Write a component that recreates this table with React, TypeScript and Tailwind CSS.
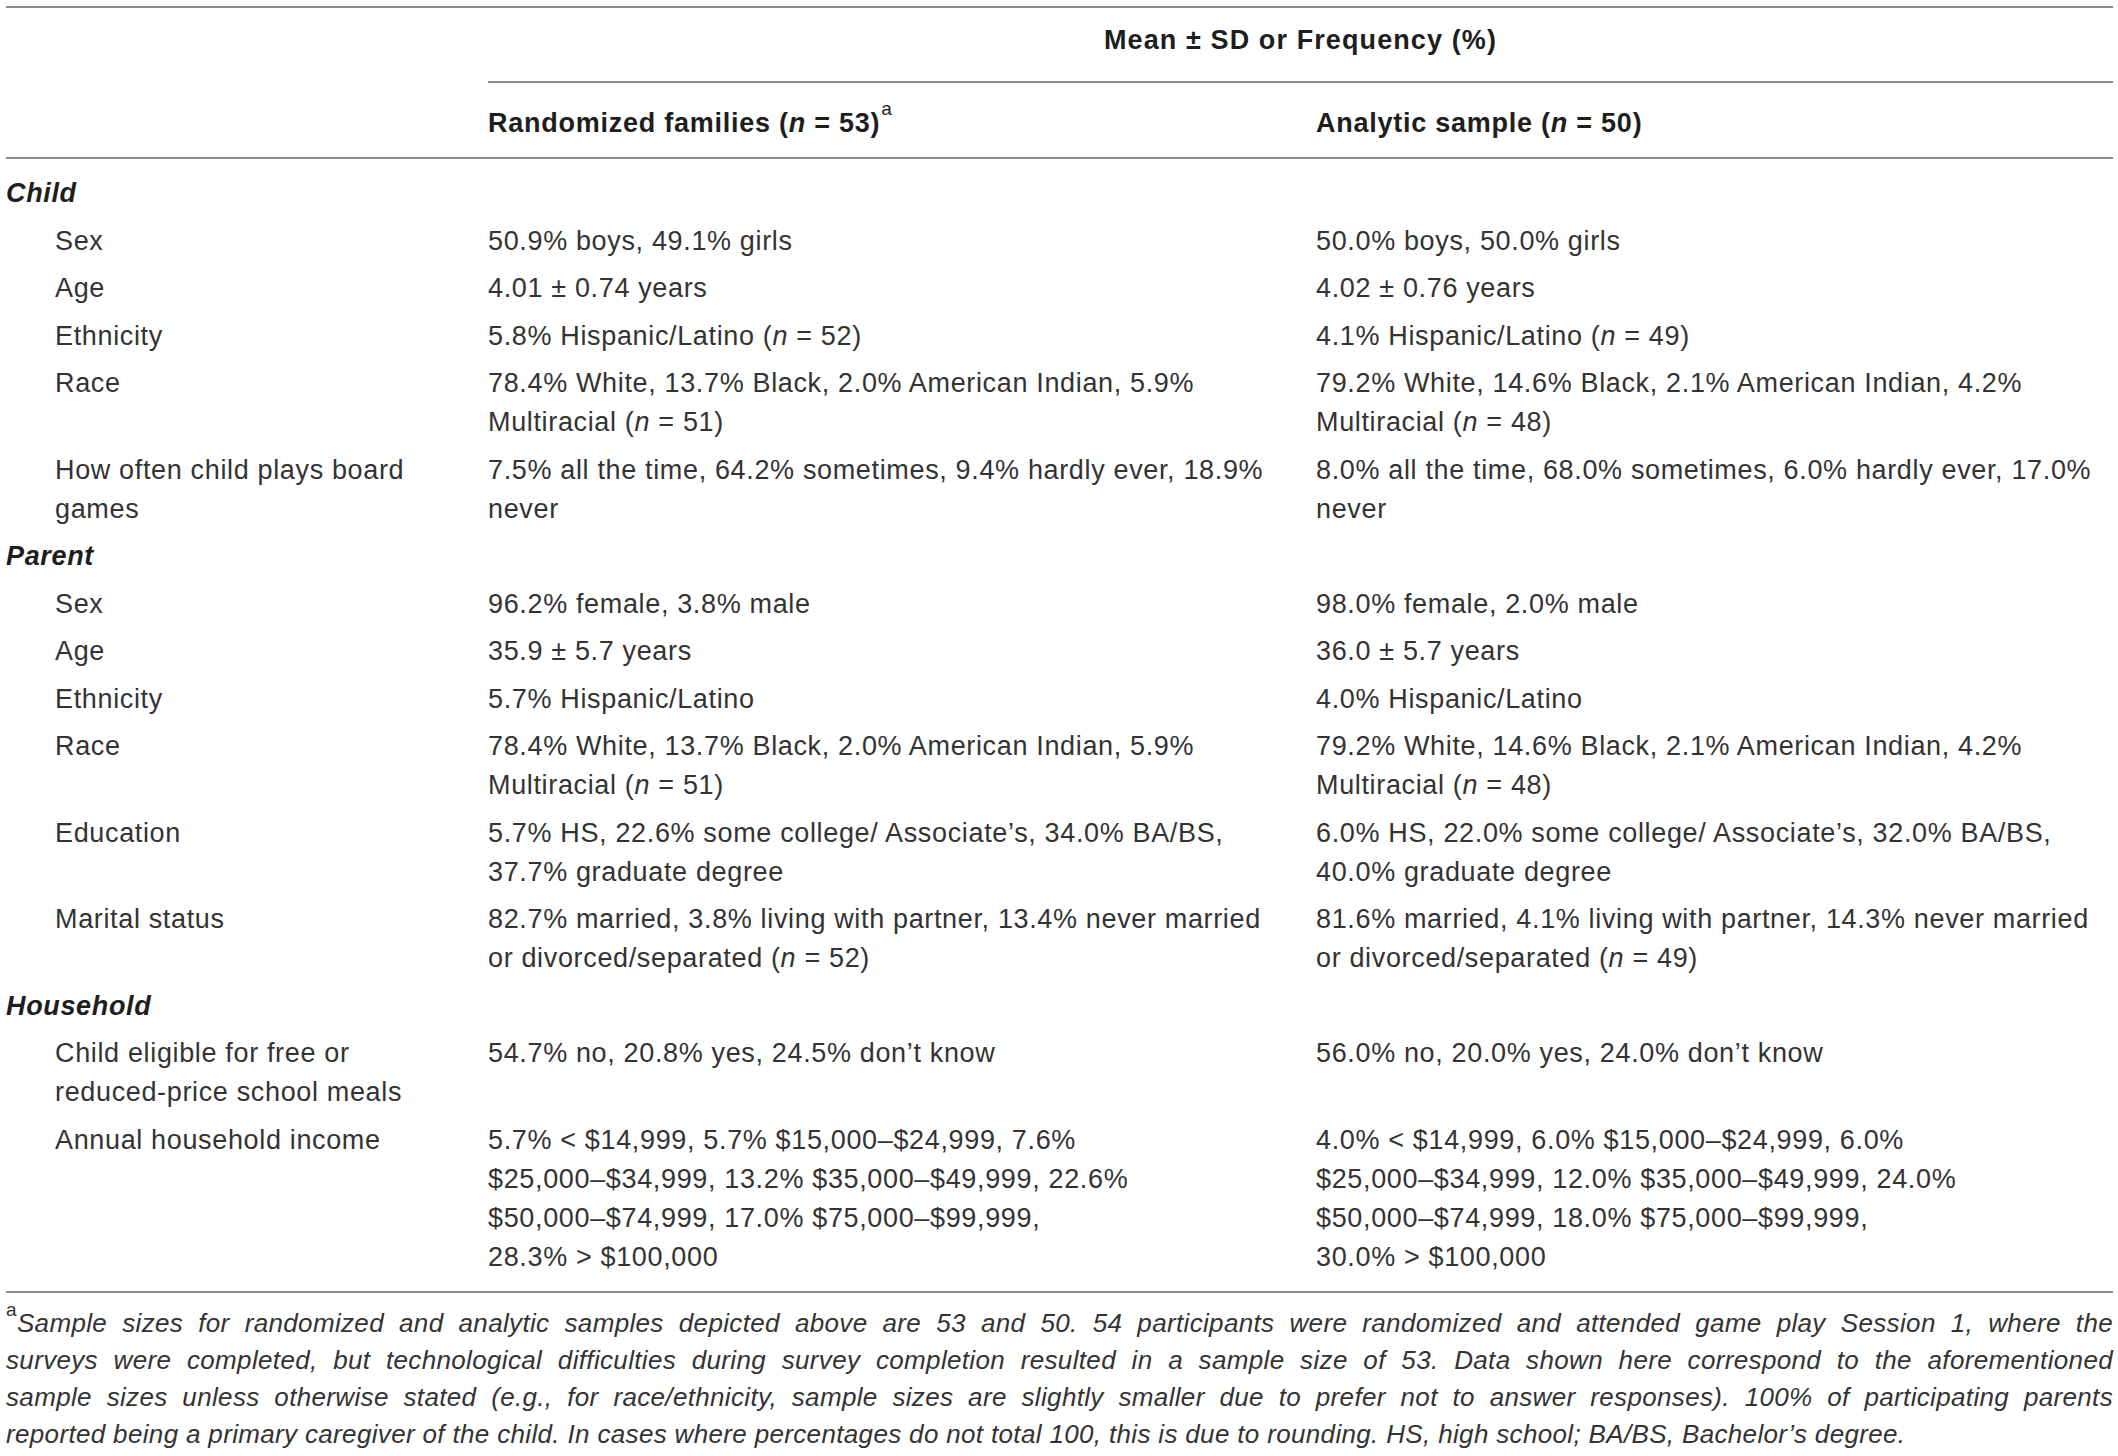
import React from "react";

type Line = React.ReactNode;

const N = () => <span className="italic">n</span>;

function Cell({ lines, className = "" }: { lines: Line[]; className?: string }) {
  return (
    <div className={className}>
      {lines.map((l, i) => (
        <div key={i} className="whitespace-nowrap">
          {l}
        </div>
      ))}
    </div>
  );
}

function Row({ label, a, b }: { label: Line[]; a: Line[]; b: Line[] }) {
  return (
    <>
      <Cell lines={label} className="pl-[49px] py-[4.25px]" />
      <Cell lines={a} className="py-[4.25px]" />
      <Cell lines={b} className="py-[4.25px]" />
    </>
  );
}

function Category({ children }: { children: React.ReactNode }) {
  return <div className="col-span-3 py-[4.25px] font-bold italic text-[#1e1e1e]">{children}</div>;
}

const rule = "h-[2px] bg-[#8c8c8c]";

export default function App() {
  return (
    <div className="w-[2118px] min-h-[1456px] bg-white text-[#333333] font-['Liberation_Sans',Arial,sans-serif] text-[27px] leading-[39px] tracking-[0.65px] pl-[6px] pr-[5px] pt-[6px]">
      <div className={rule} />
      <div className="grid grid-cols-[482px_1fr]">
        <div />
        <div>
          <div className="pt-[13px] pb-[21px] text-center font-bold tracking-[1.1px] text-[#1e1e1e]">
            Mean ± SD or Frequency (%)
          </div>
          <div className={rule} />
        </div>
      </div>
      <div className="grid grid-cols-[482px_828px_1fr] pt-[21px] pb-[14px] font-bold text-[#1e1e1e] tracking-[0.75px]">
        <div />
        <div>
          Randomized families (<N /> = 53)
          <sup className="font-normal text-[19px] align-[8px] ml-[1px]">a</sup>
        </div>
        <div>
          Analytic sample (<N /> = 50)
        </div>
      </div>
      <div className={rule} />
      <div className="grid grid-cols-[482px_828px_1fr] pt-[11px] pb-[10px]">
        <Category>Child</Category>
        <Row label={["Sex"]} a={["50.9% boys, 49.1% girls"]} b={["50.0% boys, 50.0% girls"]} />
        <Row label={["Age"]} a={["4.01 ± 0.74 years"]} b={["4.02 ± 0.76 years"]} />
        <Row
          label={["Ethnicity"]}
          a={[<>5.8% Hispanic/Latino (<N /> = 52)</>]}
          b={[<>4.1% Hispanic/Latino (<N /> = 49)</>]}
        />
        <Row
          label={["Race"]}
          a={["78.4% White, 13.7% Black, 2.0% American Indian, 5.9%", <>Multiracial (<N /> = 51)</>]}
          b={["79.2% White, 14.6% Black, 2.1% American Indian, 4.2%", <>Multiracial (<N /> = 48)</>]}
        />
        <Row
          label={["How often child plays board", "games"]}
          a={["7.5% all the time, 64.2% sometimes, 9.4% hardly ever, 18.9%", "never"]}
          b={["8.0% all the time, 68.0% sometimes, 6.0% hardly ever, 17.0%", "never"]}
        />
        <Category>Parent</Category>
        <Row label={["Sex"]} a={["96.2% female, 3.8% male"]} b={["98.0% female, 2.0% male"]} />
        <Row label={["Age"]} a={["35.9 ± 5.7 years"]} b={["36.0 ± 5.7 years"]} />
        <Row label={["Ethnicity"]} a={["5.7% Hispanic/Latino"]} b={["4.0% Hispanic/Latino"]} />
        <Row
          label={["Race"]}
          a={["78.4% White, 13.7% Black, 2.0% American Indian, 5.9%", <>Multiracial (<N /> = 51)</>]}
          b={["79.2% White, 14.6% Black, 2.1% American Indian, 4.2%", <>Multiracial (<N /> = 48)</>]}
        />
        <Row
          label={["Education"]}
          a={["5.7% HS, 22.6% some college/ Associate’s, 34.0% BA/BS,", "37.7% graduate degree"]}
          b={["6.0% HS, 22.0% some college/ Associate’s, 32.0% BA/BS,", "40.0% graduate degree"]}
        />
        <Row
          label={["Marital status"]}
          a={[
            "82.7% married, 3.8% living with partner, 13.4% never married",
            <>or divorced/separated (<N /> = 52)</>,
          ]}
          b={[
            "81.6% married, 4.1% living with partner, 14.3% never married",
            <>or divorced/separated (<N /> = 49)</>,
          ]}
        />
        <Category>Household</Category>
        <Row
          label={["Child eligible for free or", "reduced-price school meals"]}
          a={["54.7% no, 20.8% yes, 24.5% don’t know"]}
          b={["56.0% no, 20.0% yes, 24.0% don’t know"]}
        />
        <Row
          label={["Annual household income"]}
          a={[
            "5.7% < $14,999, 5.7% $15,000–$24,999, 7.6%",
            "$25,000–$34,999, 13.2% $35,000–$49,999, 22.6%",
            "$50,000–$74,999, 17.0% $75,000–$99,999,",
            "28.3% > $100,000",
          ]}
          b={[
            "4.0% < $14,999, 6.0% $15,000–$24,999, 6.0%",
            "$25,000–$34,999, 12.0% $35,000–$49,999, 24.0%",
            "$50,000–$74,999, 18.0% $75,000–$99,999,",
            "30.0% > $100,000",
          ]}
        />
      </div>
      <div className={rule} />
      <div className="pt-[12px] text-[26px] leading-[37px] tracking-[0.34px] italic text-[#333333]">
        <div className="text-justify [text-align-last:justify]">
          <sup className="not-italic text-[19px] align-[7px]">a</sup>Sample sizes for randomized and analytic samples
          depicted above are 53 and 50. 54 participants were randomized and attended game play Session 1, where the
        </div>
        <div className="text-justify [text-align-last:justify]">
          surveys were completed, but technological difficulties during survey completion resulted in a sample size of
          53. Data shown here correspond to the aforementioned
        </div>
        <div className="text-justify [text-align-last:justify]">
          sample sizes unless otherwise stated (e.g., for race/ethnicity, sample sizes are slightly smaller due to
          prefer not to answer responses). 100% of participating parents
        </div>
        <div>
          reported being a primary caregiver of the child. In cases where percentages do not total 100, this is due to
          rounding. HS, high school; BA/BS, Bachelor’s degree.
        </div>
      </div>
    </div>
  );
}
